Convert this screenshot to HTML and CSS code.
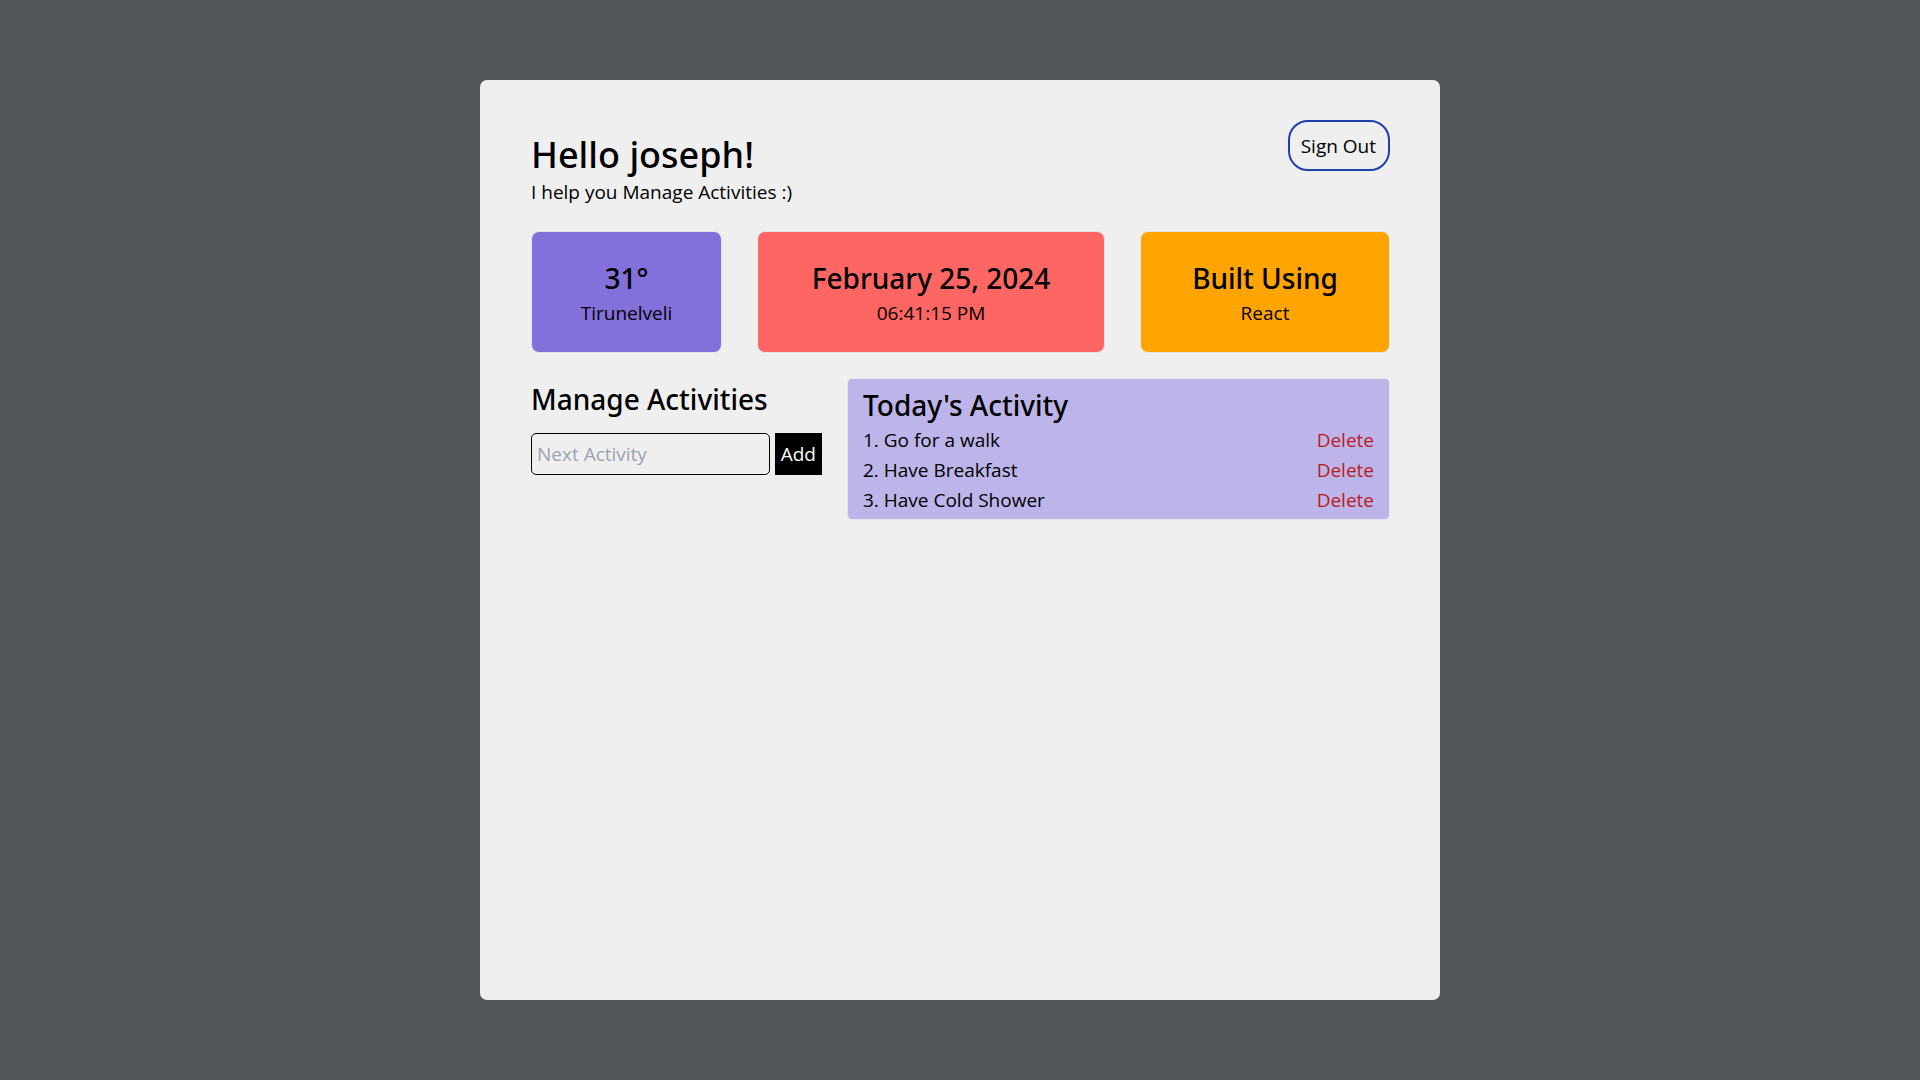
FILE: index.html
```html
<!DOCTYPE html>
<html lang="en">
<head>
<meta charset="utf-8">
<meta name="viewport" content="width=device-width, initial-scale=1">
<title>Activity Manager</title>
<link rel="stylesheet" href="styles.css">
</head>
<body>
<main class="panel">
  <header class="header">
    <div class="greeting">
      <h1 class="greeting-title">Hello joseph!</h1>
      <p>I help you Manage Activities :)</p>
    </div>
    <button class="sign-out" type="button">Sign Out</button>
  </header>

  <section class="cards" aria-label="Overview">
    <article class="card card-weather">
      <h2 class="heading">31°</h2>
      <p>Tirunelveli</p>
    </article>
    <article class="card card-date">
      <h2 class="heading">February 25, 2024</h2>
      <p>06:41:15 PM</p>
    </article>
    <article class="card card-stack">
      <h2 class="heading">Built Using</h2>
      <p>React</p>
    </article>
  </section>

  <div class="workspace">
    <section class="manage">
      <h2 class="heading">Manage Activities</h2>
      <form class="add-form">
        <input class="add-input" type="text" placeholder="Next Activity" aria-label="Next Activity">
        <button class="add-button" type="button">Add</button>
      </form>
    </section>

    <section class="today">
      <h2 class="heading">Today's Activity</h2>
      <ol class="activities">
        <li class="activity"><span>1. Go for a walk</span><button class="delete" type="button">Delete</button></li>
        <li class="activity"><span>2. Have Breakfast</span><button class="delete" type="button">Delete</button></li>
        <li class="activity"><span>3. Have Cold Shower</span><button class="delete" type="button">Delete</button></li>
      </ol>
    </section>
  </div>
</main>
</body>
</html>
```
FILE: styles.css
```css
*,
*::before,
*::after {
  box-sizing: border-box;
}

body {
  margin: 0;
  min-height: 100vh;
  padding: 80px 25%;
  display: flex;
  background: #525659;
  color: #000;
  font: 400 19px/30px "Open Sans", "Noto Sans", sans-serif;
}

h1,
h2,
p,
ol {
  margin: 0;
  padding: 0;
}

button,
input {
  margin: 0;
  font: inherit;
  color: inherit;
}

button {
  cursor: pointer;
}

.panel {
  flex: 1;
  min-width: 0;
  padding: 40px 50px 40px 51px;
  border-radius: 7px;
  background: #efefef;
}

.header {
  display: flex;
  justify-content: space-between;
  align-items: flex-start;
}

.greeting {
  padding-top: 13px;
}

.greeting-title {
  font-family: "Noto Sans", "Open Sans", sans-serif;
  font-size: 36px;
  line-height: 44px;
  font-weight: 500;
}

.heading {
  margin-bottom: 1px;
  font-family: "Noto Sans", "Open Sans", sans-serif;
  font-size: 28px;
  line-height: 38px;
  font-weight: 500;
}

.sign-out {
  padding: 9px 12px 8px 11px;
  border: 2px solid #1e40af;
  border-radius: 20px;
  background: transparent;
}

.cards {
  display: grid;
  grid-template-columns: 191fr 348fr 250fr;
  gap: 35px;
  margin-top: 24px;
}

.card {
  padding: 27px 10px 24px;
  border: 1px solid #e5e7eb;
  border-radius: 8px;
  text-align: center;
  white-space: nowrap;
}

.card-weather {
  background: #8470db;
}

.card-date {
  background: #fd6663;
}

.card-stack {
  background: #ffa400;
}

.workspace {
  display: grid;
  grid-template-columns: 291fr 543fr;
  align-items: start;
  gap: 25px;
  margin-top: 25px;
}

.manage {
  min-width: 0;
  padding-top: 2px;
}

.add-form {
  display: flex;
  gap: 5px;
  margin-top: 15px;
}

.add-input {
  flex: 1;
  min-width: 0;
  padding: 5px;
  border: 1px solid #000;
  border-radius: 5px;
  background: transparent;
}

.add-input::placeholder {
  color: #9ca3af;
  opacity: 1;
}

.add-button {
  padding: 6px;
  border: 0;
  background: #000;
  color: #fff;
}

.today {
  padding: 7px 15px 4px;
  border: 1px solid #e5e7eb;
  border-radius: 5px;
  background: #bdb4ea;
}

.activities {
  list-style: none;
}

.activity {
  display: flex;
  justify-content: space-between;
}

.delete {
  padding: 0;
  border: 0;
  background: transparent;
  color: #b91c1c;
}
```
